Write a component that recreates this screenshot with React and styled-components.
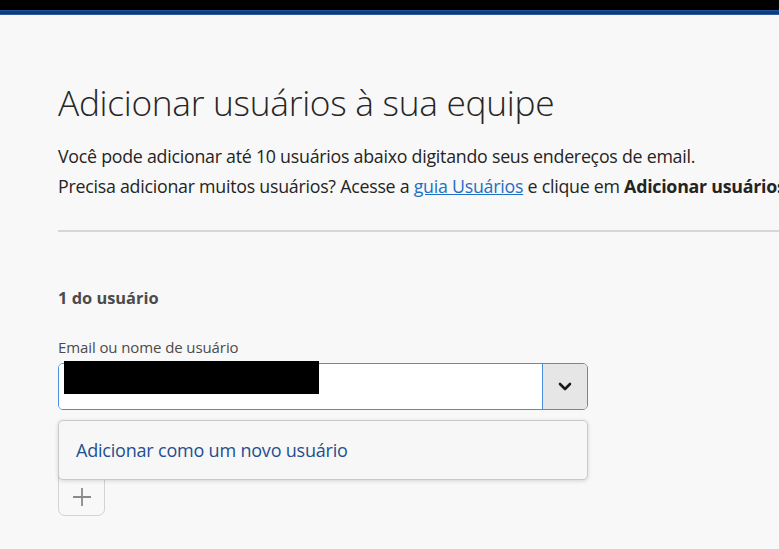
import React from "react";
import styled, { createGlobalStyle } from "styled-components";

const Global = createGlobalStyle`
  html, body { margin: 0; padding: 0; }
  body {
    background: #f8f8f8;
    font-family: "Open Sans", "Noto Sans", sans-serif;
    color: #2c2c2c;
    overflow: hidden;
    width: 779px;
    height: 549px;
  }
`;

const TopBar = styled.div`
  height: 10px;
  background: #000;
`;

const BlueBar = styled.div`
  height: 5px;
  background: linear-gradient(#2a5ea6 0, #0f3f82 30%, #0d3a78 70%, #3d6aa8 100%);
`;

const Main = styled.main`
  padding: 65px 0 0 58px;
  white-space: nowrap;
`;

const Title = styled.h1`
  margin: 0;
  font-size: 35.3px;
  font-weight: 300;
  line-height: 44px;
  color: #262626;
  letter-spacing: -0.3px;
`;

const Lead = styled.p`
  margin: 17px 0 0;
  font-size: 17.8px;
  line-height: 30px;
  color: #242424;
  letter-spacing: -0.25px;
`;

const Link = styled.a`
  color: #1f6fc5;
  text-decoration: underline;
`;

const Strong = styled.strong`
  font-weight: 700;
`;

const Divider = styled.hr`
  margin: 29px 0 0;
  border: 0;
  height: 2px;
  background: #d6d6d6;
`;

const Section = styled.section`
  margin-top: 56px;
  width: 530px;
`;

const UserHeading = styled.h2`
  margin: 0;
  font-size: 16.4px;
  font-weight: 700;
  color: #4b4b4b;
  line-height: 20px;
`;

const FieldLabel = styled.label`
  display: block;
  margin-top: 30px;
  font-size: 15px;
  color: #4b4b4b;
  line-height: 18px;
  letter-spacing: -0.1px;
`;

const ComboWrap = styled.div`
  position: relative;
  margin-top: 7px;
`;

const Combo = styled.div`
  display: flex;
  height: 47px;
  border: 1.5px solid #4b8fdc;
  border-radius: 5px;
  background: #fff;
  box-sizing: border-box;
  overflow: hidden;
`;

const ComboInput = styled.div`
  flex: 1;
  background: #fff;
`;

const ComboButton = styled.button`
  width: 45px;
  border: 0;
  border-left: 1.5px solid #4b8fdc;
  background: #e6e6e6;
  display: flex;
  align-items: center;
  justify-content: center;
  padding: 0;
`;

const Redaction = styled.div`
  position: absolute;
  left: 6px;
  top: -2px;
  width: 255px;
  height: 33px;
  background: #000;
`;

const Menu = styled.div`
  position: absolute;
  left: 0;
  right: 0;
  top: 57px;
  height: 60px;
  box-sizing: border-box;
  background: #f7f7f7;
  border: 1px solid #c9c9c9;
  border-radius: 5px;
  box-shadow: 0 1px 4px rgba(0, 0, 0, 0.15);
  display: flex;
  align-items: center;
  padding: 0 0 0 17px;
  z-index: 2;
`;

const MenuItem = styled.div`
  font-size: 18px;
  color: #1d4f91;
  letter-spacing: -0.2px;
`;

const AddButton = styled.button`
  margin-top: 59px;
  width: 47px;
  height: 47px;
  border: 1px solid #d3d3d3;
  border-radius: 7px;
  background: #f8f8f8;
  display: flex;
  align-items: center;
  justify-content: center;
  padding: 8px 0 0;
`;

export default function App() {
  return (
    <>
      <Global />
      <TopBar />
      <BlueBar />
      <Main>
        <Title>Adicionar usuários à sua equipe</Title>
        <Lead>
          Você pode adicionar até 10 usuários abaixo digitando seus endereços de email.
          <br />
          Precisa adicionar muitos usuários? Acesse a <Link href="#">guia Usuários</Link> e clique em{" "}
          <Strong>Adicionar usuários</Strong>.
        </Lead>
        <Divider />
        <Section>
          <UserHeading>1 do usuário</UserHeading>
          <FieldLabel>Email ou nome de usuário</FieldLabel>
          <ComboWrap>
            <Combo>
              <ComboInput />
              <ComboButton aria-label="Abrir">
                <svg width="14" height="9" viewBox="0 0 14 9">
                  <path d="M2 2 L7 7 L12 2" fill="none" stroke="#1a1a1a" strokeWidth="2.6" strokeLinecap="round" strokeLinejoin="round" />
                </svg>
              </ComboButton>
            </Combo>
            <Redaction />
            <Menu>
              <MenuItem>Adicionar como um novo usuário</MenuItem>
            </Menu>
          </ComboWrap>
          <AddButton aria-label="Adicionar">
            <svg width="20" height="20" viewBox="0 0 20 20">
              <path d="M10 1 V19 M1 10 H19" stroke="#8a8a8a" strokeWidth="1.8" />
            </svg>
          </AddButton>
        </Section>
      </Main>
    </>
  );
}
